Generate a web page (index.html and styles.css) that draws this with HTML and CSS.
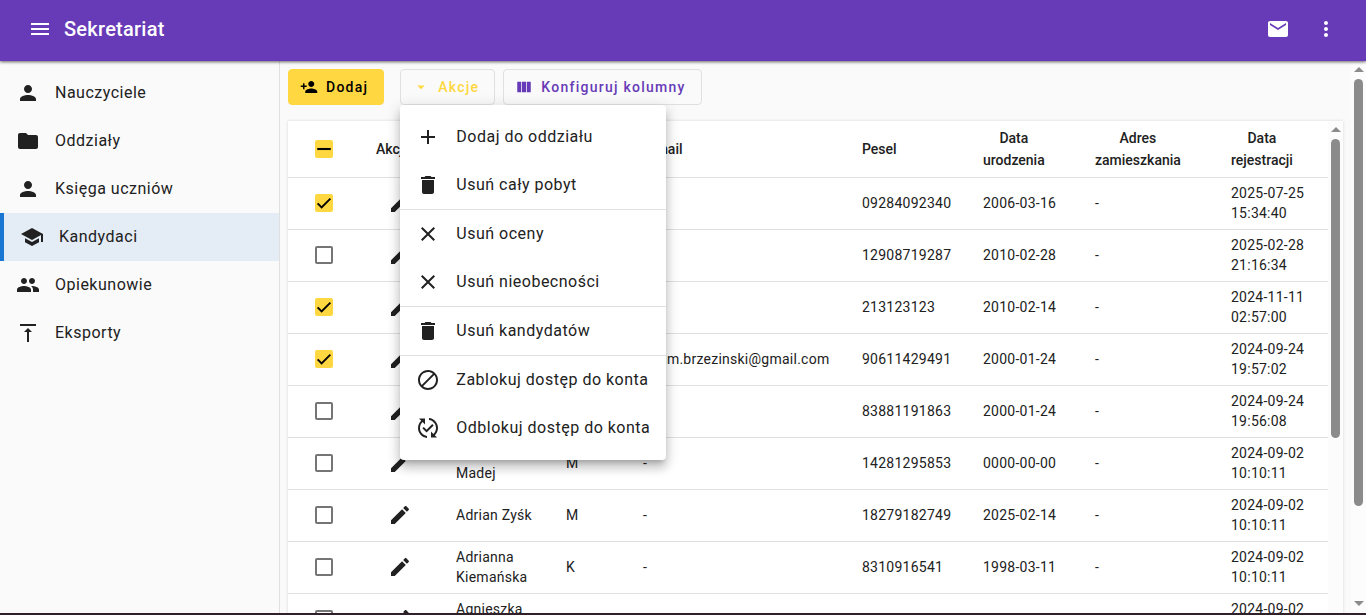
FILE: index.html
```html
<!DOCTYPE html>
<html lang="pl">
<head>
<meta charset="utf-8">
<meta name="viewport" content="width=device-width, initial-scale=1">
<title>Sekretariat</title>
<link rel="stylesheet" href="styles.css">
</head>
<body>
<svg class="sprite" aria-hidden="true">
  <symbol id="i-menu" viewBox="0 0 24 24"><path d="M3 18h18v-2H3v2zm0-5h18v-2H3v2zm0-7v2h18V6H3z"/></symbol>
  <symbol id="i-mail" viewBox="0 0 24 24"><path d="M20 4H4c-1.100 0-1.990.9-1.990 2L2 18c0 1.100.9 2 2 2h16c1.100 0 2-.9 2-2V6c0-1.100-.9-2-2-2zm0 4l-8 5-8-5V6l8 5 8-5v2z"/></symbol>
  <symbol id="i-more" viewBox="0 0 24 24"><path d="M12 8c1.100 0 2-.9 2-2s-.9-2-2-2-2 .9-2 2 .9 2 2 2zm0 2c-1.100 0-2 .9-2 2s.9 2 2 2 2-.9 2-2-.9-2-2-2zm0 6c-1.100 0-2 .9-2 2s.9 2 2 2 2-.9 2-2-.9-2-2-2z"/></symbol>
  <symbol id="i-person" viewBox="0 0 24 24"><path d="M12 12c2.210 0 4-1.790 4-4s-1.790-4-4-4-4 1.790-4 4 1.790 4 4 4zm0 2c-2.670 0-8 1.340-8 4v2h16v-2c0-2.660-5.330-4-8-4z"/></symbol>
  <symbol id="i-folder" viewBox="0 0 24 24"><path d="M10 4H4c-1.100 0-1.990.9-1.990 2L2 18c0 1.100.9 2 2 2h16c1.100 0 2-.9 2-2V8c0-1.100-.9-2-2-2h-8l-2-2z"/></symbol>
  <symbol id="i-school" viewBox="0 0 24 24"><path d="M5 13.180v4L12 21l7-3.820v-4L12 17l-7-3.820zM12 3L1 9l11 6 9-4.910V17h2V9L12 3z"/></symbol>
  <symbol id="i-group" viewBox="0 0 24 24"><path d="M16 11c1.660 0 2.990-1.340 2.990-3S17.660 5 16 5s-3 1.340-3 3 1.340 3 3 3zm-8 0c1.660 0 2.990-1.340 2.990-3S9.660 5 8 5 5 6.340 5 8s1.340 3 3 3zm0 2c-2.330 0-7 1.170-7 3.500V19h14v-2.500c0-2.330-4.670-3.500-7-3.500zm8 0c-.290 0-.620.020-.970.050 1.160.840 1.970 1.970 1.970 3.450V19h6v-2.500c0-2.330-4.670-3.500-7-3.500z"/></symbol>
  <symbol id="i-export" viewBox="0 0 24 24"><path d="M8 11h3v10h2V11h3l-4-4-4 4zM4 3v2h16V3H4z"/></symbol>
  <symbol id="i-person-add" viewBox="0 0 24 24"><path d="M15 12c2.210 0 4-1.790 4-4s-1.790-4-4-4-4 1.790-4 4 1.790 4 4 4zm-9-2V7H4v3H1v2h3v3h2v-3h3v-2H6zm9 4c-2.670 0-8 1.340-8 4v2h16v-2c0-2.660-5.330-4-8-4z"/></symbol>
  <symbol id="i-drop" viewBox="0 0 24 24"><path d="M7 10l5 5 5-5z"/></symbol>
  <symbol id="i-columns" viewBox="0 0 24 24"><path d="M3 5h5.300v14H3zM9.300 5h5.400v14H9.300zM15.700 5H21v14h-5.300z"/></symbol>
  <symbol id="i-add" viewBox="0 0 24 24"><path d="M19 13h-6v6h-2v-6H5v-2h6V5h2v6h6v2z"/></symbol>
  <symbol id="i-delete" viewBox="0 0 24 24"><path d="M6 19c0 1.100.9 2 2 2h8c1.100 0 2-.9 2-2V7H6v12zM19 4h-3.500l-1-1h-5l-1 1H5v2h14V4z"/></symbol>
  <symbol id="i-close" viewBox="0 0 24 24"><path d="M19 6.410L17.590 5 12 10.590 6.410 5 5 6.410 10.590 12 5 17.590 6.410 19 12 13.410 17.590 19 19 17.590 13.410 12z"/></symbol>
  <symbol id="i-block" viewBox="0 0 24 24"><path d="M12 2C6.480 2 2 6.480 2 12s4.480 10 10 10 10-4.480 10-10S17.520 2 12 2zM4 12c0-4.420 3.580-8 8-8 1.850 0 3.550.630 4.900 1.690L5.690 16.900C4.630 15.550 4 13.850 4 12zm8 8c-1.850 0-3.550-.630-4.900-1.690L18.310 7.100C19.370 8.450 20 10.150 20 12c0 4.420-3.580 8-8 8z"/></symbol>
  <symbol id="i-published" viewBox="0 0 24 24"><path d="M17.660 9.530l-7.070 7.070-4.240-4.240 1.410-1.410 2.830 2.830 5.660-5.660 1.410 1.410zM4 12c0-2.330 1.020-4.420 2.620-5.880L9 8.500v-6H3l2.200 2.200C3.240 6.520 2 9.110 2 12c0 5.190 3.950 9.450 9 9.950v-2.020c-3.940-.490-7-3.860-7-7.930zm18 0c0-5.190-3.950-9.450-9-9.950v2.020c3.940.490 7 3.860 7 7.930 0 2.330-1.020 4.420-2.620 5.880L15 15.500v6h6l-2.200-2.200c1.960-1.820 3.200-4.410 3.200-7.300z"/></symbol>
  <symbol id="i-edit" viewBox="0 0 24 24"><path d="M3 17.250V21h3.750L17.810 9.940l-3.750-3.750L3 17.250zM20.710 7.040c.390-.390.390-1.020 0-1.410l-2.340-2.340c-.390-.390-1.020-.390-1.410 0l-1.830 1.830 3.750 3.750 1.830-1.830z"/></symbol>
  <symbol id="i-check" viewBox="0 0 24 24"><path d="M3.500 12.500 8.800 17.800 20.500 6.100" fill="none" stroke="currentColor" stroke-width="2.500"/></symbol>
  <symbol id="i-dash" viewBox="0 0 24 24"><path d="M3 12h18" fill="none" stroke="currentColor" stroke-width="2.800"/></symbol>
</svg>

<div class="app">
  <header class="topbar">
    <button class="icon-button" type="button" aria-label="Menu"><svg class="icon"><use href="#i-menu"/></svg></button>
    <h1 class="title">Sekretariat</h1>
    <button class="icon-button" type="button" aria-label="Wiadomości"><svg class="icon"><use href="#i-mail"/></svg></button>
    <button class="icon-button" type="button" aria-label="Więcej"><svg class="icon"><use href="#i-more"/></svg></button>
  </header>

  <nav class="sidebar">
    <a class="nav-item" href="#"><svg class="icon"><use href="#i-person"/></svg>Nauczyciele</a>
    <a class="nav-item" href="#"><svg class="icon"><use href="#i-folder"/></svg>Oddziały</a>
    <a class="nav-item" href="#"><svg class="icon"><use href="#i-person"/></svg>Księga uczniów</a>
    <a class="nav-item nav-item-active" href="#" aria-current="page"><svg class="icon"><use href="#i-school"/></svg>Kandydaci</a>
    <a class="nav-item" href="#"><svg class="icon"><use href="#i-group"/></svg>Opiekunowie</a>
    <a class="nav-item" href="#"><svg class="icon"><use href="#i-export"/></svg>Eksporty</a>
  </nav>

  <main class="content">
    <div class="toolbar">
      <button class="button button-filled" type="button"><svg class="icon-small"><use href="#i-person-add"/></svg>Dodaj</button>
      <div class="menu-anchor">
        <button class="button button-accent" type="button" aria-haspopup="menu" aria-expanded="true"><svg class="icon-small"><use href="#i-drop"/></svg>Akcje</button>
        <div class="menu" role="menu">
          <button class="menu-item" type="button" role="menuitem"><svg class="icon"><use href="#i-add"/></svg>Dodaj do oddziału</button>
          <button class="menu-item" type="button" role="menuitem"><svg class="icon"><use href="#i-delete"/></svg>Usuń cały pobyt</button>
          <div class="menu-divider" role="separator"></div>
          <button class="menu-item" type="button" role="menuitem"><svg class="icon"><use href="#i-close"/></svg>Usuń oceny</button>
          <button class="menu-item" type="button" role="menuitem"><svg class="icon"><use href="#i-close"/></svg>Usuń nieobecności</button>
          <div class="menu-divider" role="separator"></div>
          <button class="menu-item" type="button" role="menuitem"><svg class="icon"><use href="#i-delete"/></svg>Usuń kandydatów</button>
          <div class="menu-divider" role="separator"></div>
          <button class="menu-item" type="button" role="menuitem"><svg class="icon"><use href="#i-block"/></svg>Zablokuj dostęp do konta</button>
          <button class="menu-item" type="button" role="menuitem"><svg class="icon"><use href="#i-published"/></svg>Odblokuj dostęp do konta</button>
        </div>
      </div>
      <button class="button button-primary" type="button"><svg class="icon-small"><use href="#i-columns"/></svg>Konfiguruj kolumny</button>
    </div>

    <div class="card">
      <table class="table">
        <colgroup>
          <col class="col-check"><col class="col-actions"><col class="col-name"><col class="col-sex"><col class="col-email"><col class="col-pesel"><col class="col-born"><col class="col-address"><col class="col-created">
        </colgroup>
        <thead>
          <tr>
            <th><label class="check"><input class="check-box check-mixed" type="checkbox" aria-label="Zaznacz wszystko"><svg class="check-mark"><use href="#i-dash"/></svg></label></th>
            <th>Akcje</th><th></th><th></th><th>E-mail</th><th>Pesel</th>
            <th><span class="head-label">Data<br>urodzenia</span></th>
            <th><span class="head-label">Adres<br>zamieszkania</span></th>
            <th><span class="head-label">Data<br>rejestracji</span></th>
          </tr>
        </thead>
        <tbody>
          <tr>
            <td><label class="check"><input class="check-box" type="checkbox" checked aria-label="Zaznacz wiersz"><svg class="check-mark"><use href="#i-check"/></svg></label></td>
            <td><button class="edit" type="button" aria-label="Edytuj"><svg class="icon"><use href="#i-edit"/></svg></button></td>
            <td></td><td></td><td></td><td>09284092340</td><td>2006-03-16</td><td>-</td><td>2025-07-25 15:34:40</td>
          </tr>
          <tr>
            <td><label class="check"><input class="check-box" type="checkbox" aria-label="Zaznacz wiersz"></label></td>
            <td><button class="edit" type="button" aria-label="Edytuj"><svg class="icon"><use href="#i-edit"/></svg></button></td>
            <td></td><td></td><td></td><td>12908719287</td><td>2010-02-28</td><td>-</td><td>2025-02-28 21:16:34</td>
          </tr>
          <tr>
            <td><label class="check"><input class="check-box" type="checkbox" checked aria-label="Zaznacz wiersz"><svg class="check-mark"><use href="#i-check"/></svg></label></td>
            <td><button class="edit" type="button" aria-label="Edytuj"><svg class="icon"><use href="#i-edit"/></svg></button></td>
            <td></td><td></td><td></td><td>213123123</td><td>2010-02-14</td><td>-</td><td>2024-11-11 02:57:00</td>
          </tr>
          <tr>
            <td><label class="check"><input class="check-box" type="checkbox" checked aria-label="Zaznacz wiersz"><svg class="check-mark"><use href="#i-check"/></svg></label></td>
            <td><button class="edit" type="button" aria-label="Edytuj"><svg class="icon"><use href="#i-edit"/></svg></button></td>
            <td></td><td></td><td>adam.brzezinski@gmail.com</td><td>90611429491</td><td>2000-01-24</td><td>-</td><td>2024-09-24 19:57:02</td>
          </tr>
          <tr>
            <td><label class="check"><input class="check-box" type="checkbox" aria-label="Zaznacz wiersz"></label></td>
            <td><button class="edit" type="button" aria-label="Edytuj"><svg class="icon"><use href="#i-edit"/></svg></button></td>
            <td></td><td></td><td></td><td>83881191863</td><td>2000-01-24</td><td>-</td><td>2024-09-24 19:56:08</td>
          </tr>
          <tr>
            <td><label class="check"><input class="check-box" type="checkbox" aria-label="Zaznacz wiersz"></label></td>
            <td><button class="edit" type="button" aria-label="Edytuj"><svg class="icon"><use href="#i-edit"/></svg></button></td>
            <td><br>Madej</td><td>M</td><td>-</td><td>14281295853</td><td>0000-00-00</td><td>-</td><td>2024-09-02 10:10:11</td>
          </tr>
          <tr>
            <td><label class="check"><input class="check-box" type="checkbox" aria-label="Zaznacz wiersz"></label></td>
            <td><button class="edit" type="button" aria-label="Edytuj"><svg class="icon"><use href="#i-edit"/></svg></button></td>
            <td>Adrian Zyśk</td><td>M</td><td>-</td><td>18279182749</td><td>2025-02-14</td><td>-</td><td>2024-09-02 10:10:11</td>
          </tr>
          <tr>
            <td><label class="check"><input class="check-box" type="checkbox" aria-label="Zaznacz wiersz"></label></td>
            <td><button class="edit" type="button" aria-label="Edytuj"><svg class="icon"><use href="#i-edit"/></svg></button></td>
            <td>Adrianna Kiemańska</td><td>K</td><td>-</td><td>8310916541</td><td>1998-03-11</td><td>-</td><td>2024-09-02 10:10:11</td>
          </tr>
          <tr>
            <td><label class="check"><input class="check-box" type="checkbox" aria-label="Zaznacz wiersz"></label></td>
            <td><button class="edit" type="button" aria-label="Edytuj"><svg class="icon"><use href="#i-edit"/></svg></button></td>
            <td>Agnieszka<br><br></td><td></td><td></td><td></td><td></td><td></td><td>2024-09-02<br><br></td>
          </tr>
        </tbody>
      </table>
      <div class="scrollbar" aria-hidden="true"><span class="arrow-up"></span><span class="thumb thumb-table"></span><span class="rest-table"></span></div>
    </div>
  </main>
  <div class="scrollbar scrollbar-page" aria-hidden="true"><span class="arrow-up"></span><span class="thumb thumb-page"></span><span class="rest-page"></span><span class="arrow-down"></span></div>
</div>
</body>
</html>
```
FILE: styles.css
```css
:root {
  --primary: #673ab7;
  --accent: #ffd740;
  --ink: #212121;
  --line: #e0e0e0;
  --page: #fafafa;
  --track-body: 0.03125em;
  --track-small: 0.0178571em;
  --track-button: 0.0892857em;
}

* { box-sizing: border-box; }

body {
  margin: 0;
  font-family: Roboto, "Noto Sans", sans-serif;
  color: var(--ink);
  background: var(--page);
}

button { font: inherit; letter-spacing: inherit; cursor: pointer; }

.sprite { display: none; }
.icon { width: 24px; height: 24px; fill: currentColor; flex: none; }
.icon-small { width: 18px; height: 18px; fill: currentColor; flex: none; }

.app {
  display: grid;
  grid-template: auto minmax(0, 1fr) / 280px minmax(0, 1fr) auto;
  height: 100vh;
  overflow: hidden;
  border-bottom: 2px solid #30202a;
}

.topbar {
  grid-column: 1 / -1;
  display: flex;
  align-items: center;
  padding: 5px 16px 8px;
  color: #fff;
  background: var(--primary);
  box-shadow: 0 1px 3px rgba(0, 0, 0, 0.6);
  z-index: 1;
}

.title {
  flex: 1;
  margin: 0;
  font-size: 20px;
  font-weight: 500;
  line-height: 32px;
  letter-spacing: 0.0125em;
}

.icon-button {
  display: grid;
  place-items: center;
  width: 48px;
  height: 48px;
  padding: 0;
  border: 0;
  color: inherit;
  background: none;
}

.sidebar {
  padding-top: 8px;
  border-right: 1px solid var(--line);
}

.nav-item {
  display: flex;
  align-items: center;
  gap: 15px;
  height: 48px;
  padding: 0 16px;
  font-size: 16px;
  line-height: 20px;
  letter-spacing: var(--track-body);
  color: inherit;
  text-decoration: none;
}

.nav-item-active {
  border-left: 4px solid #1976d2;
  background: #e4ecf6;
}

.content { padding: 8px 8px 0; min-width: 0; }

.toolbar { display: flex; gap: 8px; margin-bottom: 16px; }
.menu-anchor { position: relative; margin-left: 8px; }

.button {
  display: flex;
  align-items: center;
  gap: 8px;
  height: 36px;
  padding: 0 15px 0 11px;
  border: 1px solid var(--line);
  border-radius: 4px;
  background: transparent;
  font-size: 14px;
  font-weight: 500;
  letter-spacing: var(--track-button);
}

.button-filled { border-color: var(--accent); background: var(--accent); color: #000; }
.button-accent { color: var(--accent); }
.button-primary { color: var(--primary); }

.menu {
  position: absolute;
  top: 100%;
  left: 0;
  z-index: 2;
  padding: 8px 0;
  border-radius: 4px;
  background: #fff;
  box-shadow: 0 5px 5px -3px rgba(0, 0, 0, 0.2), 0 8px 10px 1px rgba(0, 0, 0, 0.14), 0 3px 14px 2px rgba(0, 0, 0, 0.12);
}

.menu-item {
  display: flex;
  align-items: center;
  gap: 16px;
  width: 100%;
  height: 48px;
  padding: 0 16px;
  border: 0;
  background: none;
  color: inherit;
  font-size: 16px;
  line-height: 20px;
  letter-spacing: var(--track-body);
  white-space: nowrap;
}

.menu-divider { height: 1px; background: var(--line); }

.card {
  display: flex;
  background: #fff;
  box-shadow: 0 0 3px rgba(0, 0, 0, 0.14);
}

.table {
  flex: 1;
  width: 100%;
  table-layout: fixed;
  border-collapse: separate;
  border-spacing: 0;
  font-size: 14px;
  line-height: 20px;
  letter-spacing: var(--track-small);
}

.col-check { width: 72px; }
.col-actions { width: 80px; }
.col-name { width: 110px; }
.col-sex { width: 77px; }
.col-email { width: 219px; }
.col-pesel { width: 121px; }
.col-born { width: 112px; }
.col-address { width: 136px; }
.col-created { width: 113px; }

.table th,
.table td {
  height: 52px;
  padding: 0 16px 1px;
  border-bottom: 1px solid var(--line);
  text-align: left;
  vertical-align: middle;
}

.table th {
  height: 57px;
  padding-bottom: 0;
  font-weight: 500;
  line-height: 22px;
  letter-spacing: normal;
}

.head-label { display: inline-block; text-align: center; vertical-align: middle; }

.check { display: grid; place-items: center; }
.check-box,
.check-mark { grid-area: 1 / 1; width: 18px; height: 18px; }
.check-mark { color: #000; pointer-events: none; }

.check-box {
  appearance: none;
  margin: 0;
  border: 2px solid #757575;
  border-radius: 2px;
}

.check-box:checked,
.check-mixed { border-color: var(--accent); background: var(--accent); }

.edit {
  display: grid;
  place-items: center;
  width: 100%;
  padding: 0;
  border: 0;
  background: none;
  color: inherit;
}

.scrollbar {
  display: flex;
  flex-direction: column;
  align-items: center;
  flex: none;
  width: 15px;
  padding-top: 6px;
  background: #fcfcfc;
}

.scrollbar-page { padding-bottom: 7px; }

.arrow-up,
.arrow-down { border: 5px solid transparent; }
.arrow-up { border-top: 0; border-bottom-color: #8b8b8b; margin-bottom: 7px; }
.arrow-down { border-bottom: 0; border-top-color: #8b8b8b; margin-top: 7px; }

.thumb { width: 9px; border-radius: 5px; background: #8b8b8b; }
.thumb-page { flex: 83; }
.rest-page { flex: 17; }
.thumb-table { flex: 59; }
.rest-table { flex: 41; }
```
